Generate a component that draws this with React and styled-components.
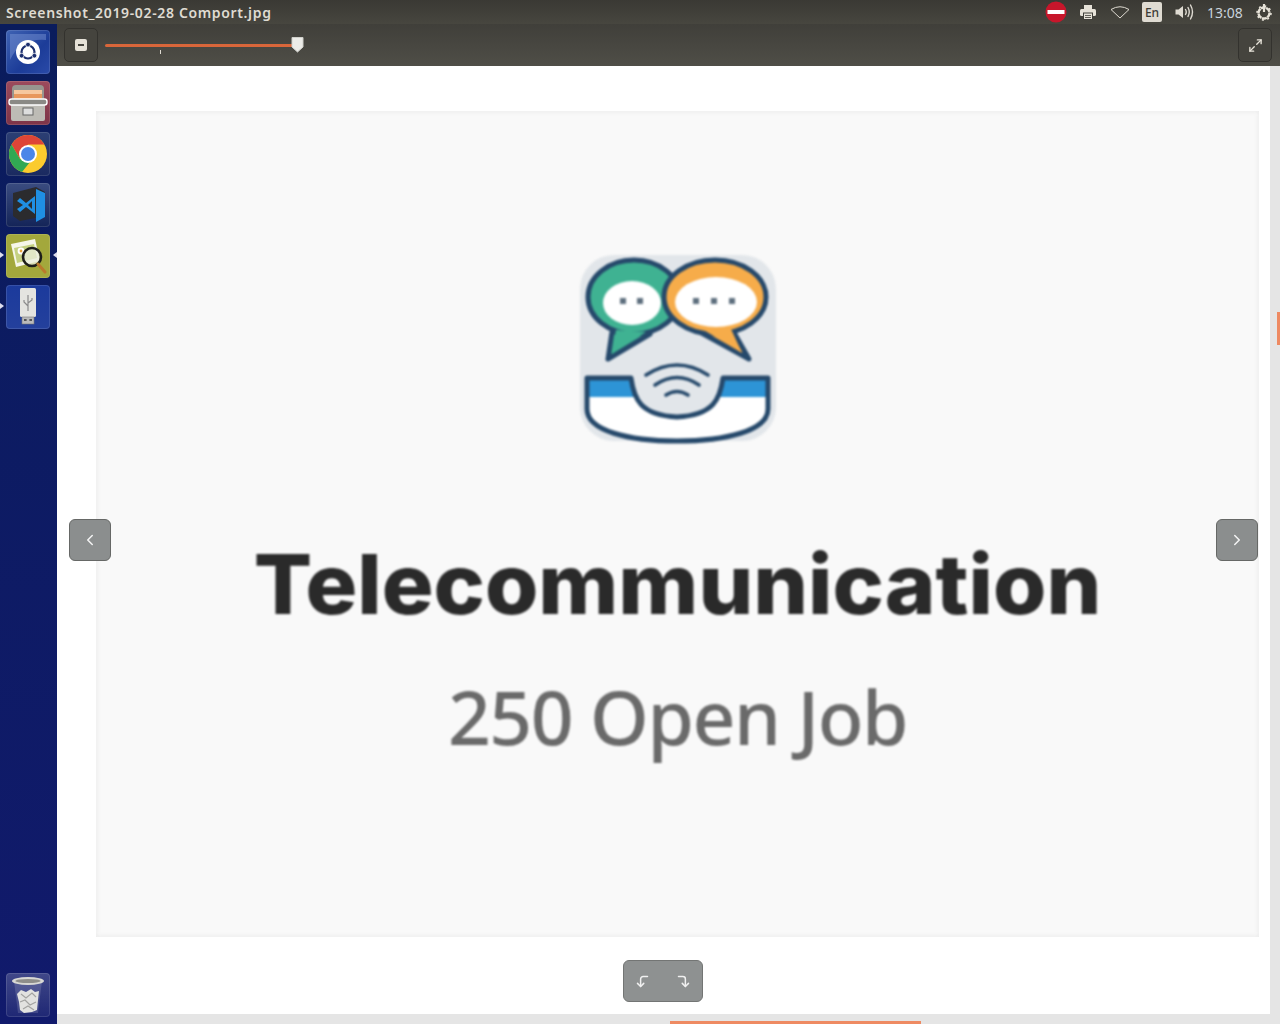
import React from 'react'
import styled, { createGlobalStyle } from 'styled-components'
import { ChevronLeft, ChevronRight, CornerLeftDown, CornerRightDown, Maximize2 } from 'lucide-react'

const GlobalStyle = createGlobalStyle`
  html, body { margin: 0; padding: 0; height: 100%; overflow: hidden; background: #fff; }
  #root { height: 1024px; }
`

const Screen = styled.div`
  width: 1280px;
  height: 1024px;
  display: flex;
  flex-direction: column;
  overflow: hidden;
  font-family: "Noto Sans", "DejaVu Sans", sans-serif;
`

const TopBar = styled.div`
  height: 24px;
  flex: none;
  display: flex;
  align-items: center;
  justify-content: space-between;
  background: linear-gradient(#3a3934, #47463f);
  color: #dfdbd2;
`

const WindowTitle = styled.div`
  padding-left: 6px;
  font-size: 14px;
  font-weight: 600;
  letter-spacing: 0.65px;
  white-space: nowrap;
`

const Indicators = styled.div`
  display: flex;
  align-items: center;
`

const Indicator = styled.div`
  width: ${p => p.$w || 32}px;
  height: 24px;
  display: flex;
  align-items: center;
  justify-content: center;
`

const LangBox = styled.div`
  width: 20px;
  height: 20px;
  border-radius: 2px;
  background: #dfdbd2;
  color: #3c3b37;
  font-size: 12px;
  font-weight: 500;
  display: flex;
  align-items: center;
  justify-content: center;
`

const Clock = styled.span`
  font-size: 14px;
  color: #c9d3dc;
`

const Body = styled.div`
  flex: 1;
  min-height: 0;
  display: flex;
`

const Launcher = styled.div`
  width: 57px;
  flex: none;
  box-sizing: border-box;
  padding: 6px 0 7px 6px;
  display: flex;
  flex-direction: column;
  gap: 7px;
  background: linear-gradient(#0a1c5c, #111a6c);
`

const Tile = styled.div`
  position: relative;
  width: 44px;
  height: 44px;
  border-radius: 4px;
  background: ${p => p.$bg};
  box-shadow: inset 0 0 0 1px rgba(255, 255, 255, 0.12);
  margin-top: ${p => (p.$bottom ? 'auto' : '0')};
  svg { display: block; filter: blur(0.4px); }
`

const Pip = styled.i`
  position: absolute;
  top: 18px;
  ${p => (p.$right ? 'right: -7px;' : 'left: -6px;')}
  width: 0;
  height: 0;
  border-top: 3px solid transparent;
  border-bottom: 3px solid transparent;
  ${p => (p.$right ? 'border-right: 4px solid #dde;' : 'border-left: 4px solid #dde;')}
`

const Main = styled.div`
  flex: 1;
  min-width: 0;
  display: flex;
  flex-direction: column;
`

const Toolbar = styled.div`
  height: 42px;
  flex: none;
  box-sizing: border-box;
  padding: 4px 8px 4px 7px;
  display: flex;
  align-items: center;
  background: linear-gradient(#403f3a, #4f4e47);
`

const ToolButton = styled.div`
  width: 34px;
  height: 34px;
  flex: none;
  box-sizing: border-box;
  border-radius: 5px;
  border: 1px solid #33322e;
  background: #45443e;
  display: flex;
  align-items: center;
  justify-content: center;
  color: #e8e4da;
`

const MinusIcon = styled.div`
  width: 12px;
  height: 12px;
  border-radius: 2px;
  background: #e5e1d7;
  display: flex;
  align-items: center;
  justify-content: center;
  &::after {
    content: '';
    width: 6px;
    height: 2px;
    background: #45443e;
  }
`

const Slider = styled.div`
  position: relative;
  width: 193px;
  height: 3px;
  margin-left: 7px;
  margin-right: auto;
  border-radius: 2px;
  background: #d9663a;
`

const SliderKnob = styled.svg`
  position: absolute;
  right: -6px;
  top: -8px;
`

const SliderTick = styled.i`
  position: absolute;
  left: 55px;
  top: 6px;
  width: 1px;
  height: 4px;
  background: #dfdbd2;
`

const ViewerRow = styled.div`
  flex: 1;
  min-height: 0;
  display: flex;
`

const Viewer = styled.div`
  position: relative;
  flex: 1;
  min-width: 0;
  box-sizing: border-box;
  padding: 45px 11px 0 39px;
  background: #fff;
  display: flex;
  flex-direction: column;
`

const Card = styled.div`
  height: 826px;
  flex: none;
  box-sizing: border-box;
  padding-top: 136px;
  background: #f9f9f9;
  box-shadow: inset 0 0 4px 1px #ececec;
  display: flex;
  flex-direction: column;
  align-items: center;
`

const Logo = styled.svg`
  display: block;
  filter: blur(1.1px);
`

const Heading = styled.div`
  margin-top: 85px;
  font-family: Inter, "Liberation Sans", sans-serif;
  font-size: 83px;
  line-height: 100px;
  font-weight: 800;
  color: #2a2a2a;
  filter: blur(1.1px);
  transform: scaleX(1.04);
  white-space: nowrap;
`

const Subheading = styled.div`
  margin-top: 40px;
  font-family: "Noto Sans", "Open Sans", sans-serif;
  font-size: 75px;
  line-height: 84px;
  font-weight: 500;
  letter-spacing: -1.5px;
  color: #6a6a6a;
  filter: blur(1.1px);
  white-space: nowrap;
`

const NavButton = styled.div`
  position: absolute;
  top: 453px;
  ${p => (p.$side === 'left' ? 'left: 12px;' : 'right: 12px;')}
  width: 42px;
  height: 42px;
  box-sizing: border-box;
  border-radius: 6px;
  border: 1px solid #666866;
  background: #8b8e8e;
  color: #f4f4f4;
  display: flex;
  align-items: center;
  justify-content: center;
`

const RotatePill = styled.div`
  width: 80px;
  height: 42px;
  margin: 23px auto 0 527px;
  box-sizing: border-box;
  border-radius: 6px;
  border: 1px solid #737574;
  background: #8e9191;
  color: #f0f0f0;
  display: flex;
  align-items: center;
  justify-content: space-between;
  padding: 0 11px;
`

const VerticalTrack = styled.div`
  width: 10px;
  flex: none;
  background: #e5e5e5;
  display: flex;
  justify-content: flex-end;
`

const VerticalThumb = styled.div`
  width: 3px;
  height: 33px;
  margin-top: 246px;
  background: #ee8a62;
`

const HorizontalTrack = styled.div`
  height: 10px;
  flex: none;
  background: #e5e5e5;
  display: flex;
  align-items: flex-end;
`

const HorizontalThumb = styled.div`
  width: 251px;
  height: 3px;
  margin-left: 613px;
  background: #ee8a62;
`

const UbuntuIcon = () => (
  <svg width="44" height="44" viewBox="0 0 44 44">
    <path d="M4 30 Q14 8 40 10 V4 H4 Z" fill="#7f9ad6" fillOpacity="0.45" />
    <circle cx="22" cy="22" r="12" fill="#fff" />
    <circle cx="22" cy="22" r="6.5" fill="none" stroke="#1c2f6e" strokeWidth="2.2" />
    <circle cx="22" cy="14.6" r="2.4" fill="#1c2f6e" stroke="#fff" strokeWidth="0.8" />
    <circle cx="15.6" cy="25.7" r="2.4" fill="#1c2f6e" stroke="#fff" strokeWidth="0.8" />
    <circle cx="28.4" cy="25.7" r="2.4" fill="#1c2f6e" stroke="#fff" strokeWidth="0.8" />
  </svg>
)

const CabinetIcon = () => (
  <svg width="44" height="44" viewBox="0 0 44 44">
    <path d="M6 8 Q6 4 10 4 H34 Q38 4 38 8 V20 H6 Z" fill="#98968f" />
    <rect x="8" y="9" width="28" height="4" fill="#f6c79e" />
    <rect x="8" y="13" width="28" height="6" fill="#e8975c" />
    <rect x="5" y="20" width="34" height="20" rx="2" fill="#bdbbb5" />
    <rect x="3" y="18" width="38" height="6" rx="2.5" fill="#8a8985" stroke="#fff" strokeWidth="1.4" />
    <rect x="17" y="27" width="10" height="7" fill="#ddd" stroke="#666" strokeWidth="1" />
  </svg>
)

const ChromeIcon = () => (
  <svg width="44" height="44" viewBox="0 0 44 44">
    <circle cx="22" cy="22" r="19" fill="#fbcb2e" />
    <path d="M5.5 12.5 A19 19 0 0 1 38.5 12.5 H22 L14 27 Z" fill="#de4537" />
    <path d="M5.5 12.5 L14 27 L24 30 L16 40 A19 19 0 0 1 5.5 12.5 Z" fill="#31a853" />
    <circle cx="22" cy="22" r="9" fill="#fff" />
    <circle cx="22" cy="22" r="7" fill="#4a86e8" />
  </svg>
)

const VsCodeIcon = () => (
  <svg width="44" height="44" viewBox="0 0 44 44">
    <path d="M7 10 L30 4 L39 9 V33 L14 38 L7 33 Z" fill="#2b2b2e" />
    <path d="M30 6 L39 10 V34 L30 39 Z" fill="#1f8fe3" />
    <path d="M29 13 V31 L20 24 L14 29 L11 26 L17 22 L11 18 L14 15 L20 20 Z M26 18 L22 22 L26 26 Z" fill="#1f8fe3" fillRule="evenodd" />
  </svg>
)

const ViewerIcon = () => (
  <svg width="44" height="44" viewBox="0 0 44 44">
    <path d="M5 10 L29 5 L34 27 L10 33 Z" fill="#f6f6ea" />
    <path d="M8 14 L28 10 L31 24 L11 29 Z" fill="#c5d182" />
    <circle cx="15" cy="17" r="3.4" fill="#fff" />
    <circle cx="15" cy="17" r="1.4" fill="#e8a53a" />
    <circle cx="26" cy="23" r="9" fill="#e9eedb" fillOpacity="0.75" stroke="#1e1e1a" strokeWidth="2.6" />
    <path d="M32 30 L39 38" stroke="#b97a2c" strokeWidth="3" strokeLinecap="round" />
  </svg>
)

const UsbIcon = () => (
  <svg width="44" height="44" viewBox="0 0 44 44">
    <rect x="14" y="3" width="16" height="29" rx="1.5" fill="#e4e4e0" />
    <rect x="16" y="32" width="12" height="7" fill="#bbb" stroke="#777" strokeWidth="0.6" />
    <rect x="18" y="34" width="2.6" height="2" fill="#555" />
    <rect x="23.4" y="34" width="2.6" height="2" fill="#555" />
    <path d="M22 10 V26 M22 21 L18 17 V15 M22 18 L26 15 V13" fill="none" stroke="#8b8b8b" strokeWidth="1.2" />
  </svg>
)

const TrashIcon = () => (
  <svg width="44" height="44" viewBox="0 0 44 44">
    <path d="M8 8 L12 40 H32 L36 8 Z" fill="rgba(255,255,255,0.14)" />
    <path d="M11 21 L15 17 L20 19 L25 16 L29 19 L33 18 L32 27 L31 37 L26 39 L18 40 L14 37 L13 29 Z" fill="#e2e2e0" />
    <path d="M15 21 L20 25 L26 20 L30 24 M14 29 L19 27 L24 32 L30 29 M17 36 L22 33 L28 37" fill="none" stroke="#a3a3a1" strokeWidth="1.2" />
    <ellipse cx="22" cy="8" rx="16" ry="4" fill="#d8d8d4" />
    <ellipse cx="22" cy="8" rx="12.5" ry="2" fill="#8e8e8a" />
  </svg>
)

const StopIcon = () => (
  <svg width="22" height="22" viewBox="0 0 22 22">
    <circle cx="11" cy="11" r="10.5" fill="#c7162b" />
    <rect x="2.5" y="9" width="17" height="4" fill="#fff" />
  </svg>
)

const PrinterIcon = () => (
  <svg width="16" height="16" viewBox="0 0 16 16" fill="#e6e2d8">
    <rect x="4" y="1" width="8" height="4" />
    <rect x="0" y="5" width="16" height="7" rx="1.5" />
    <rect x="3.5" y="9" width="9" height="6.5" fill="#e6e2d8" stroke="#3f3e39" strokeWidth="1" />
    <path d="M5 11.5 H11 M5 13.5 H11" stroke="#3f3e39" strokeWidth="0.8" />
  </svg>
)

const WifiIcon = () => (
  <svg width="20" height="14" viewBox="0 0 20 14">
    <path d="M1 4.5 Q10 -1 19 4.5 L10 13 Z" fill="none" stroke="#dfdbd2" strokeWidth="1" strokeLinejoin="round" />
  </svg>
)

const VolumeIcon = () => (
  <svg width="20" height="18" viewBox="0 0 20 18" fill="none">
    <path d="M0.5 6.5 H3.5 L8 3 V15 L3.5 11.5 H0.5 Z" fill="#dfdbd2" />
    <path d="M10.5 6.5 Q12 9 10.5 11.5 M13 4.5 Q15.5 9 13 13.5 M15.5 2 Q19.5 9 15.5 16" stroke="#dfdbd2" strokeWidth="1.4" strokeLinecap="round" />
  </svg>
)

const PowerIcon = () => (
  <svg width="18" height="18" viewBox="0 0 18 18" fill="none" stroke="#e6e2d8">
    <circle cx="9" cy="10" r="5.5" strokeWidth="2.4" strokeDasharray="5 0.5" />
    <circle cx="9" cy="10" r="7" strokeWidth="1.6" strokeDasharray="2 3.5" />
    <path d="M9 1 V9" strokeWidth="2.2" />
  </svg>
)

const TelecomLogo = () => (
  <Logo width="205" height="202" viewBox="575 248 205 202">
    <rect x="580" y="256" width="196" height="186" rx="34" fill="#e2e6ea" />
    <path d="M612 333 L608 360 L650 335 Z" fill="#3fb292" stroke="#26496b" strokeWidth="5" strokeLinejoin="round" />
    <ellipse cx="634" cy="298" rx="46" ry="37" fill="#3fb292" stroke="#26496b" strokeWidth="5" />
    <path d="M616 331 L612 355 L646 333 Z" fill="#3fb292" />
    <ellipse cx="632" cy="304" rx="29" ry="22" fill="#fff" />
    <rect x="620" y="299" width="6" height="6" fill="#5e6f7e" />
    <rect x="637" y="299" width="6" height="6" fill="#5e6f7e" />
    <path d="M698 332 L749 360 L733 332 Z" fill="#f6ac4a" stroke="#26496b" strokeWidth="5" strokeLinejoin="round" />
    <ellipse cx="715" cy="298" rx="51" ry="37" fill="#f6ac4a" stroke="#26496b" strokeWidth="5" />
    <path d="M702 330 L742 354 L731 330 Z" fill="#f6ac4a" />
    <ellipse cx="716" cy="303" rx="41" ry="25" fill="#fff" />
    <rect x="693" y="299" width="6" height="6" fill="#5e6f7e" />
    <rect x="711" y="299" width="6" height="6" fill="#5e6f7e" />
    <rect x="729" y="299" width="6" height="6" fill="#5e6f7e" />
    <path d="M587 379 H631 C634 400 640 416 677 418 C714 416 720 400 723 379 H768 V410 C768 432 725 442 677 442 C629 442 587 432 587 410 Z" fill="#fff" />
    <path d="M587 379 H631 C632 386 633 392 635 398 H587 Z M723 379 H768 V398 H720 C722 392 723 386 723 379 Z" fill="#2d94d6" />
    <path d="M587 379 H631 C634 400 640 416 677 418 C714 416 720 400 723 379 H768 V410 C768 432 725 442 677 442 C629 442 587 432 587 410 Z" fill="none" stroke="#26496b" strokeWidth="5" strokeLinejoin="round" />
    <path d="M646 376 Q677 356 708 376 M655 386 Q677 371 699 386 M666 396 Q677 389 688 396" fill="none" stroke="#26496b" strokeWidth="3.6" strokeLinecap="round" />
  </Logo>
)

const App = () => (
  <Screen>
    <GlobalStyle />
    <TopBar>
      <WindowTitle>Screenshot_2019-02-28 Comport.jpg</WindowTitle>
      <Indicators>
        <Indicator><StopIcon /></Indicator>
        <Indicator><PrinterIcon /></Indicator>
        <Indicator><WifiIcon /></Indicator>
        <Indicator><LangBox>En</LangBox></Indicator>
        <Indicator $w={34}><VolumeIcon /></Indicator>
        <Indicator $w={46}><Clock>13:08</Clock></Indicator>
        <Indicator $w={32}><PowerIcon /></Indicator>
      </Indicators>
    </TopBar>
    <Body>
      <Launcher>
        <Tile $bg="linear-gradient(135deg, #3f63b4, #1c3c98 60%, #2a4aa8)"><UbuntuIcon /></Tile>
        <Tile $bg="linear-gradient(#9c4a5c, #7d3448)"><CabinetIcon /></Tile>
        <Tile $bg="linear-gradient(#2c3f74, #1a2a60)"><ChromeIcon /></Tile>
        <Tile $bg="linear-gradient(#3a4c80, #142458)"><VsCodeIcon /></Tile>
        <Tile $bg="#a3a83c">
          <Pip />
          <ViewerIcon />
          <Pip $right />
        </Tile>
        <Tile $bg="linear-gradient(#1b3a9c, #24409c)">
          <Pip />
          <UsbIcon />
        </Tile>
        <Tile $bottom $bg="linear-gradient(rgba(255,255,255,0.2), rgba(255,255,255,0.06))"><TrashIcon /></Tile>
      </Launcher>
      <Main>
        <Toolbar>
          <ToolButton><MinusIcon /></ToolButton>
          <Slider>
            <SliderTick />
            <SliderKnob width="13" height="17" viewBox="0 0 13 17">
              <path d="M1 1.5 H12 V11 L6.5 16 L1 11 Z" fill="#ecece8" stroke="#cfcfca" strokeLinejoin="round" />
            </SliderKnob>
          </Slider>
          <ToolButton><Maximize2 size={15} strokeWidth={2.2} /></ToolButton>
        </Toolbar>
        <ViewerRow>
          <Viewer>
            <Card>
              <TelecomLogo />
              <Heading>Telecommunication</Heading>
              <Subheading>250 Open Job</Subheading>
            </Card>
            <RotatePill>
              <CornerLeftDown size={15} strokeWidth={2.4} />
              <CornerRightDown size={15} strokeWidth={2.4} />
            </RotatePill>
            <NavButton $side="left"><ChevronLeft size={18} strokeWidth={2} /></NavButton>
            <NavButton $side="right"><ChevronRight size={18} strokeWidth={2} /></NavButton>
          </Viewer>
          <VerticalTrack><VerticalThumb /></VerticalTrack>
        </ViewerRow>
        <HorizontalTrack><HorizontalThumb /></HorizontalTrack>
      </Main>
    </Body>
  </Screen>
)

export default App
